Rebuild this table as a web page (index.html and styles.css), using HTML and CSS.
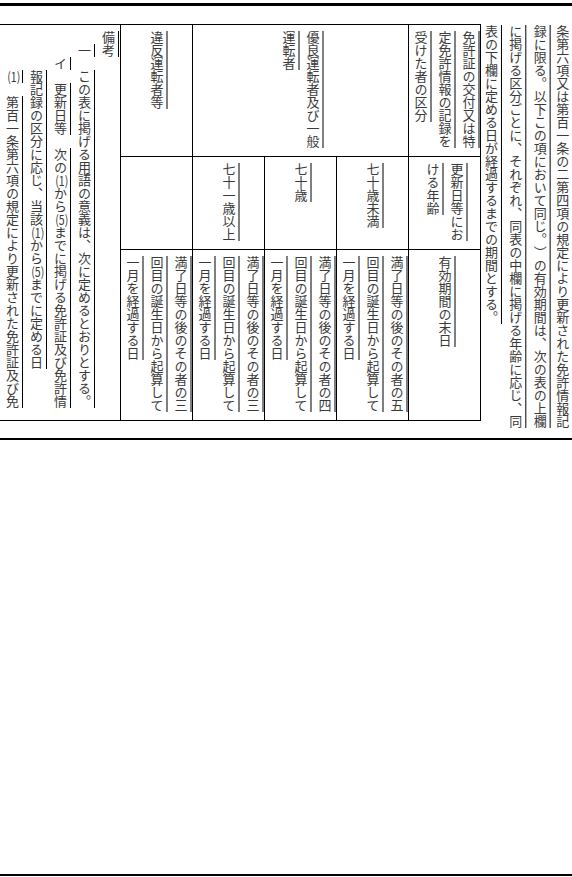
FILE: index.html
```html
<!DOCTYPE html>
<html lang="ja">
<head>
<meta charset="utf-8">
<title>有効期間</title>
<link rel="stylesheet" href="styles.css">
</head>
<body>
<div class="page">
  <div class="rule rule-top"></div>
  <div class="main">
    <div class="table">
      <div class="cell biko">
        <div class="vt">
          <span class="l"><span class="u">備考</span></span>
          <span class="l i1"><span class="u">一</span>　<span class="u">この表に掲げる用語の意義は、次に定めるとおりとする。</span></span>
          <span class="l i2"><span class="u">イ</span>　<span class="u">更新日等</span>　<span class="u">次の<span class="tcy">(1)</span>から<span class="tcy">(5)</span>までに掲げる免許証及び免許情</span></span>
          <span class="l i3"><span class="u">報記録の区分に応じ、当該<span class="tcy">(1)</span>から<span class="tcy">(5)</span>までに定める日</span></span>
          <span class="l i3"><span class="u"><span class="tcy">(1)</span></span>　<span class="u">第百一条第六項の規定により更新された免許証及び免</span></span>
        </div>
      </div>
      <div class="cell r1 ihan">
        <div class="vt"><span class="l"><span class="u">違反運転者等</span></span></div>
      </div>
      <div class="cell r2 im"></div>
      <div class="cell ib">
        <div class="vt">
          <span class="l"><span class="u">満了日等の後のその者の三</span></span>
          <span class="l"><span class="u">回目の誕生日から起算して</span></span>
          <span class="l"><span class="u">一月を経過する日</span></span>
        </div>
      </div>
      <div class="cell r1 yr">
        <div class="vt">
          <span class="l"><span class="u">優良運転者及び一般</span></span>
          <span class="l"><span class="u">運転者</span></span>
        </div>
      </div>
      <div class="cell r2 a71">
        <div class="vt"><span class="l"><span class="u">七十一歳以上</span></span></div>
      </div>
      <div class="cell r2 a70">
        <div class="vt"><span class="l"><span class="u">七十歳</span></span></div>
      </div>
      <div class="cell r2 a69">
        <div class="vt"><span class="l"><span class="u">七十歳未満</span></span></div>
      </div>
      <div class="cell d3">
        <div class="vt">
          <span class="l"><span class="u">満了日等の後のその者の三</span></span>
          <span class="l"><span class="u">回目の誕生日から起算して</span></span>
          <span class="l"><span class="u">一月を経過する日</span></span>
        </div>
      </div>
      <div class="cell d4">
        <div class="vt">
          <span class="l"><span class="u">満了日等の後のその者の四</span></span>
          <span class="l"><span class="u">回目の誕生日から起算して</span></span>
          <span class="l"><span class="u">一月を経過する日</span></span>
        </div>
      </div>
      <div class="cell d5">
        <div class="vt">
          <span class="l"><span class="u">満了日等の後のその者の五</span></span>
          <span class="l"><span class="u">回目の誕生日から起算して</span></span>
          <span class="l"><span class="u">一月を経過する日</span></span>
        </div>
      </div>
      <div class="cell r1 k1">
        <div class="vt">
          <span class="l"><span class="u">免許証の交付又は特</span></span>
          <span class="l"><span class="u">定免許情報の記録を</span></span>
          <span class="l"><span class="u">受けた者の区分</span></span>
        </div>
      </div>
      <div class="cell r2 k2">
        <div class="vt">
          <span class="l"><span class="u">更新日等にお</span></span>
          <span class="l"><span class="u">ける年齢</span></span>
        </div>
      </div>
      <div class="cell k3">
        <div class="vt"><span class="l"><span class="u">有効期間の末日</span></span></div>
      </div>
    </div>
    <div class="para">
      <span class="l"><span class="u">条第六項又は第百一条の二第四項の規定により更新された免許情報記</span></span>
      <span class="l"><span class="u">録に限る。以下この項において同じ。）の有効期間は、次の表の上欄</span></span>
      <span class="l"><span class="u">に掲げる区分ごとに、それぞれ、同表の中欄に掲げる年齢に応じ、同</span></span>
      <span class="l"><span class="u">表の下欄に定める日が経過するまでの期間とする。</span></span>
    </div>
  </div>
  <div class="rule rule-mid"></div>
  <div class="rule rule-bot"></div>
</div>
</body>
</html>
```
FILE: styles.css
```css
* { box-sizing: border-box; }

body {
  margin: 0;
  background: #fff;
  font-family: "Noto Sans CJK JP", "Noto Sans CJK SC", sans-serif;
  font-size: 13px;
  color: #3a3a3a;
  text-spacing-trim: space-all;
  text-autospace: no-autospace;
}

.page {
  width: 572px;
  height: 877px;
  overflow: hidden;
  display: flex;
  flex-direction: column;
}

.rule { background: #000; flex: none; }
.rule-top { margin-top: 3px; height: 3px; }
.rule-mid { margin-top: 17px; height: 2px; }
.rule-bot { margin-top: 434px; height: 2px; }

.main {
  flex: none;
  display: flex;
  margin-top: 18px;
  height: 397px;
}

.table {
  flex: none;
  width: 481px;
  display: grid;
  grid-template-columns: 120px repeat(5, 72px);
  grid-template-rows: 132px 93px 170px;
  grid-template-areas:
    "biko ihan yr  yr  yr  k1"
    "biko im   a71 a70 a69 k2"
    "biko ib   d3  d4  d5  k3";
  border-top: 1px solid #000;
  border-right: 1px solid #000;
  border-bottom: 1px solid #000;
}

.cell {
  border-left: 1px solid #000;
  display: flex;
  justify-content: center;
  align-items: flex-start;
  padding-top: 6px;
  min-width: 0;
}
.r1, .r2 { border-bottom: 1px solid #000; }

.biko { grid-area: biko; border-left: none; justify-content: flex-end; overflow: hidden; }
.ihan { grid-area: ihan; }
.im { grid-area: im; }
.ib { grid-area: ib; }
.yr { grid-area: yr; }
.a71 { grid-area: a71; }
.a70 { grid-area: a70; }
.a69 { grid-area: a69; }
.d3 { grid-area: d3; }
.d4 { grid-area: d4; }
.d5 { grid-area: d5; }
.k1 { grid-area: k1; }
.k2 { grid-area: k2; }
.k3 { grid-area: k3; }

.vt { writing-mode: vertical-rl; flex: none; }
.vt .l { display: block; line-height: 24px; white-space: nowrap; }

.i1 { padding-top: 1em; }
.i2 { padding-top: 2em; }
.i3 { padding-top: 3em; }

.para {
  flex: none;
  width: 91px;
  writing-mode: vertical-rl;
  padding-top: 1px;
}
.para .l { display: block; line-height: 16px; white-space: nowrap; }
.para .l:first-child { margin-right: 1.7px; }
.para .l + .l { margin-right: 6.7px; }
.para .l + .l + .l { margin-right: 8.33px; }

.u {
  text-decoration-line: underline;
  text-decoration-color: #000;
  text-decoration-thickness: 1px;
  text-underline-position: right;
  text-underline-offset: 2px;
  text-decoration-skip-ink: none;
}

.tcy { text-combine-upright: all; }
```
